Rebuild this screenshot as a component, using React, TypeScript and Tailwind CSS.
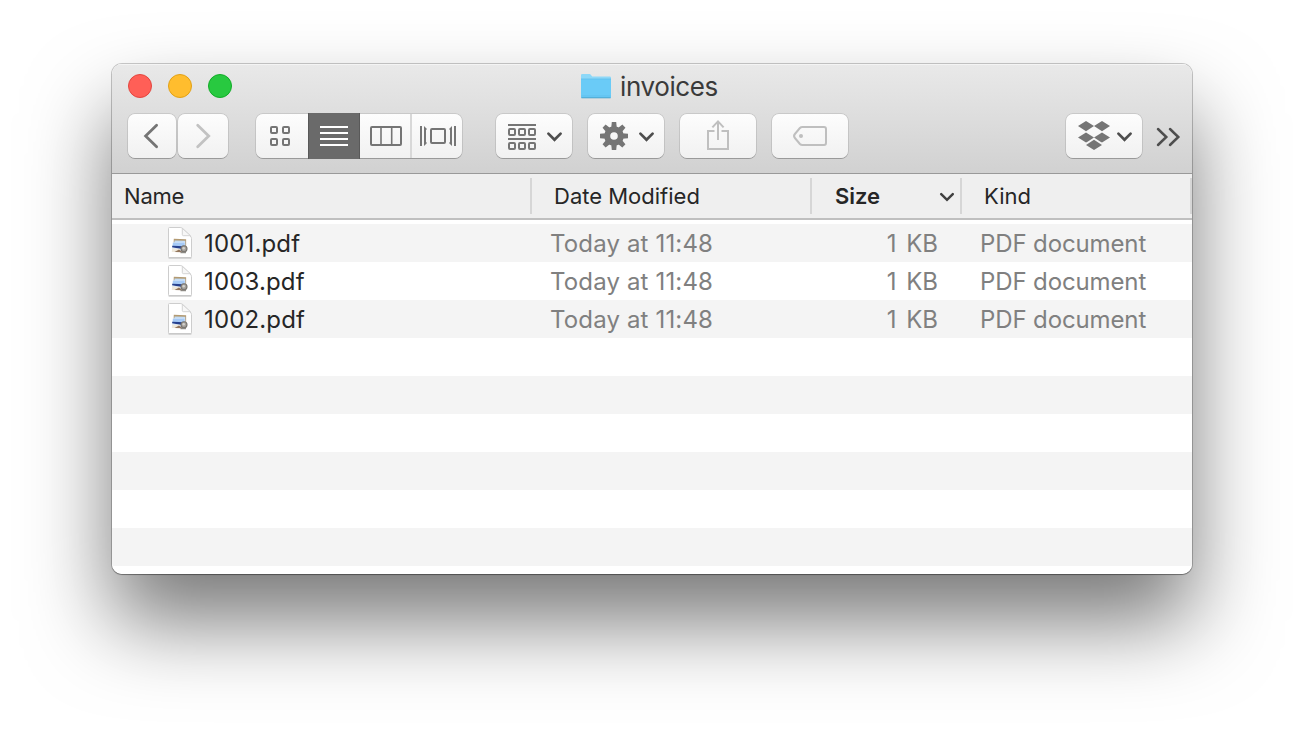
import type { ReactNode } from "react";

const FILES = ["1001.pdf", "1003.pdf", "1002.pdf"];
const EMPTY_ROWS = [0, 1, 2, 3, 4, 5];

function Light({ className }: { className: string }) {
  return <span className={`size-6 rounded-full border ${className}`} />;
}

function ToolButton({ className, children }: { className: string; children: ReactNode }) {
  return (
    <button
      className={`flex h-11 shrink-0 overflow-hidden rounded-[7px] bg-linear-to-b from-[#fdfdfd] to-[#f1f1f1] shadow-[0_0_0_0.75px_rgba(0,0,0,0.13),0_1px_0.5px_0_rgba(0,0,0,0.2)] ${className}`}
    >
      {children}
    </button>
  );
}

function Art({ box, w, h = 44, children }: { box: string; w: number; h?: number; children: ReactNode }) {
  return (
    <svg width={w} height={h} viewBox={box} fill="none" strokeWidth="2" className="block shrink-0">
      {children}
    </svg>
  );
}

function Caret({ d }: { d: string }) {
  return <path d={d} stroke="#4e4e4e" strokeWidth="2.7" strokeLinecap="round" strokeLinejoin="miter" />;
}

function FolderIcon() {
  return (
    <svg width="32" height="26" viewBox="580 73 32 26" className="mb-0.5 block shrink-0">
      <path d="M581 75.2q0-1.2 1.2-1.2h7.3q.8 0 1.3.7l1 1.3q.4.5 1.2.5h16.8q1.2 0 1.2 1.2V97q0 1-1 1h-28q-1 0-1-1z" fill="#8dd8f8" />
      <path d="M581 79h30v18q0 1-1 1h-28q-1 0-1-1z" fill="#6acbf7" />
      <path d="M581 79h30M581.5 96h29" stroke="#5bbce9" strokeWidth=".7" />
      <path d="M581.4 97.8h29.2" stroke="#4ba4cd" strokeWidth="1" />
    </svg>
  );
}

function FileIcon() {
  return (
    <svg width="26" height="34" viewBox="167 226 26 34" className="block shrink-0">
      <path d="M168.5 228.5q0-1 1-1h10.7q1.5 0 2.5 1l7.5 7.4q1.3 1.2 1.3 2.8v18q0 1-1 1h-21q-1 0-1-1z" fill="#fff" stroke="#cdcdcd" strokeWidth="1" />
      <path d="M168.6 258h22.8" stroke="#b5b5b5" strokeWidth=".8" />
      <path d="M182.3 228.3v6.2q0 1.2 1.2 1.2h7z" fill="#f7f7f7" stroke="#cfcfcf" strokeWidth=".9" />
      <path d="M173.8 238.8l12.3.5v9.2h-12.7z" fill="#b39a72" />
      <path d="M174.5 240.5l10.8.2v4.7h-11z" fill="#c3dcf5" />
      <path d="M172.6 242.4l12.3-.6.8 9.7-13.8.2z" fill="#dbe9fa" />
      <path d="M173 242.8l11.5-.4.3 3.6h-12z" fill="#a6caf6" />
      <path d="M172.2 245.7l12.7.5.1 2.2-5 .3-7.9-1.4z" fill="#27418e" />
      <path d="M172 248.4l8 .4-.8 3.1h-7.4z" fill="#efe9dc" />
      <path d="M174.5 252l4.5-2.6 3.8 2.8z" fill="#94765c" />
      <circle cx="184" cy="248.8" r="3" fill="#a5a19b" stroke="#77746f" strokeWidth="1.1" />
      <circle cx="183.7" cy="248.3" r="1.2" fill="#d3d2ce" />
      <path d="M180.5 252.7h5.5" stroke="#77736d" strokeWidth="1" />
    </svg>
  );
}

const TEETH = [0, 45, 90, 135, 180, 225, 270, 315];

export default function App() {
  return (
    <div className="h-[734px] w-[1304px] overflow-hidden bg-white px-28 pt-16 font-['Inter',sans-serif]">
      <div className="h-[510px] w-[1080px] rounded-[10px] shadow-[0_0_0_1px_rgba(0,0,0,0.2),0_1px_1px_0_rgba(0,0,0,0.25),0_48px_84px_0_rgba(0,0,0,0.53)]">
        <div className="flex h-full flex-col overflow-hidden rounded-[10px] bg-white">
          <div className="h-[110px] shrink-0 border-b border-[#999999] bg-linear-to-b from-[#e9e9e9] to-[#d1d1d1] shadow-[inset_0_1px_0_#f4f4f4]">
            <div className="grid h-[46px] grid-cols-3 items-center px-4">
              <div className="flex gap-4 pb-0.5">
                <Light className="border-[#e2463f] bg-[#ff5f57]" />
                <Light className="border-[#e1a116] bg-[#ffbd2e]" />
                <Light className="border-[#12ac28] bg-[#28c940]" />
              </div>
              <div className="flex items-center justify-center gap-2 pr-1.5">
                <FolderIcon />
                <span className="text-[26px] leading-[32px] font-[430] tracking-[-0.4px] text-[#3a3a3a]">invoices</span>
              </div>
            </div>
            <div className="flex items-center pt-1 pl-4">
              <ToolButton className="w-12">
                <Art w={48} box="128 114 48 44">
                  <path d="M156.6 125.2L145.6 136l11 10.8" stroke="#757575" strokeWidth="2.8" strokeLinecap="round" />
                </Art>
              </ToolButton>
              <ToolButton className="ml-0.5 w-[50px]">
                <Art w={50} box="178 114 50 44">
                  <path d="M197.7 125.2l11 10.8-11 10.8" stroke="#c2c2c2" strokeWidth="2.8" strokeLinecap="round" />
                </Art>
              </ToolButton>
              <div className="relative ml-7 flex w-[206px]">
                <ToolButton className="w-[206px]">
                  <Art w={206} box="256 114 206 44">
                    <g stroke="#757575">
                      <rect x="271" y="127" width="6" height="6" rx="1" />
                      <rect x="283" y="127" width="6" height="6" rx="1" />
                      <rect x="271" y="139" width="6" height="6" rx="1" />
                      <rect x="283" y="139" width="6" height="6" rx="1" />
                      <rect x="371" y="127" width="30" height="18" rx="1" />
                      <path d="M381 127v18M391.7 127v18" strokeWidth="1.6" />
                      <path d="M421 126v20M455 126v20" />
                      <rect x="431" y="129" width="14" height="14" rx="1" />
                    </g>
                    <path d="M424 126l3 3-1 1v12l1 1-3 3zM452 126l-3 3 1 1v12l-1 1 3 3z" fill="#757575" />
                    <path d="M411 114v44" stroke="#d8d8d8" />
                  </Art>
                </ToolButton>
                <div className="absolute -top-px left-[52px] h-[46px] w-[52px] border-x border-[#595959] bg-[#6a6a6a]">
                  <Art w={50} h={46} box="309 113 50 46">
                    <path d="M320 127h28M320 133h28M320 139h28M320 145h28" stroke="#fff" />
                  </Art>
                </div>
              </div>
              <ToolButton className="ml-[34px] w-[76px]">
                <Art w={76} box="496 114 76 44">
                  <g stroke="#757575">
                    <path d="M508 125h28M508 139h28" />
                    <rect x="509" y="129" width="6" height="6" rx="1" />
                    <rect x="519" y="129" width="6" height="6" rx="1" />
                    <rect x="529" y="129" width="6" height="6" rx="1" />
                    <rect x="509" y="143" width="6" height="6" rx="1" />
                    <rect x="519" y="143" width="6" height="6" rx="1" />
                    <rect x="529" y="143" width="6" height="6" rx="1" />
                  </g>
                  <Caret d="M548.4 133.6l6.1 6.2 6.1-6.2" />
                </Art>
              </ToolButton>
              <ToolButton className="ml-4 w-[76px]">
                <Art w={76} box="588 114 76 44">
                  <circle cx="614" cy="136" r="6.8" stroke="#757575" strokeWidth="6" />
                  {TEETH.map((a) => (
                    <path key={a} d="M611.2 128l.6-6h4.4l.6 6z" fill="#757575" transform={`rotate(${a} 614 136)`} />
                  ))}
                  <Caret d="M640.4 133.6l6.1 6.2 6.1-6.2" />
                </Art>
              </ToolButton>
              <ToolButton className="ml-4 w-[76px]">
                <Art w={76} box="680 114 76 44">
                  <path d="M714.5 131H708v18h20v-18h-6.5M718 140v-18.5M712.4 127.4l5.6-6 5.6 6" stroke="#bfbfbf" />
                </Art>
              </ToolButton>
              <ToolButton className="ml-4 w-[76px]">
                <Art w={76} box="772 114 76 44">
                  <path d="M802.5 127H824q2 0 2 2v14q0 2-2 2h-21.5q-1.6 0-2.6-1l-5-6q-1.7-2 0-4l5-6q1-1 2.6-1z" stroke="#bfbfbf" />
                  <circle cx="801" cy="136" r="2" fill="#bfbfbf" />
                </Art>
              </ToolButton>
              <ToolButton className="ml-[218px] w-[76px]">
                <Art w={76} box="1066 114 76 44">
                  <path
                    d="M1086 121l8 5.1-8 5.1-8-5.1zM1102 121l8 5.1-8 5.1-8-5.1zM1086 132.6l8 4.9-6.5 4.2-1.5.7-8-4.9zM1102 132.6l8 4.9-8 4.9-1.5-.7-6.5-4.2zM1094 139.8l8 5.1-8 5.1-8-5.1z"
                    fill="#757575"
                  />
                  <Caret d="M1118.4 133.6l6.1 6.2 6.1-6.2" />
                </Art>
              </ToolButton>
              <button className="ml-3">
                <Art w={28} box="1154 114 28 44">
                  <path d="M1158 129l8.3 8-8.3 8M1170 129l8.3 8-8.3 8" stroke="#4e4e4e" strokeWidth="2.5" strokeLinecap="round" />
                </Art>
              </button>
            </div>
          </div>

          <div className="flex h-[46px] shrink-0 items-center border-b-2 border-[#bfbfbf] bg-[#efefef] text-[22px] font-[430] text-[#262626]">
            <div className="flex h-9 w-[420px] items-center border-r-2 border-[#d6d6d6] pl-3 tracking-[-0.2px]">Name</div>
            <div className="flex h-9 w-[280px] items-center border-r-2 border-[#d6d6d6] pl-[22px]">Date Modified</div>
            <div className="flex h-9 w-[150px] items-center justify-between border-r-2 border-[#d6d6d6] pr-1 pl-[23px] font-semibold">
              Size
              <svg width="18" height="14" viewBox="938 191 18 14" fill="none" className="mt-0.5 block">
                <path d="M941.2 195.2l5.8 5.6 5.8-5.6" stroke="#404040" strokeWidth="2.5" strokeLinecap="round" />
              </svg>
            </div>
            <div className="flex h-9 w-[230px] items-center border-r-2 border-[#d6d6d6] pl-[22px]">Kind</div>
          </div>

          <div className="flex flex-col pt-1 text-2xl font-[430] text-[#808080]">
            {FILES.map((name) => (
              <div key={name} className="flex h-[38px] shrink-0 items-center odd:bg-[#f4f4f4]">
                <div className="flex w-[438px] items-center gap-[11px] pl-[55px] text-[#262626]">
                  <FileIcon />
                  <span className="pt-0.5 tracking-[0.15px]">{name}</span>
                </div>
                <span className="w-[262px] pt-0.5 tracking-[0.15px]">Today at 11:48</span>
                <span className="w-[126px] pt-0.5 text-right [word-spacing:3px]">1 KB</span>
                <span className="pt-0.5 pl-[42px] tracking-[-0.12px]">PDF document</span>
              </div>
            ))}
            {EMPTY_ROWS.map((n) => (
              <div key={n} className="h-[38px] shrink-0 even:bg-white odd:bg-[#f4f4f4]" />
            ))}
          </div>
        </div>
      </div>
    </div>
  );
}
